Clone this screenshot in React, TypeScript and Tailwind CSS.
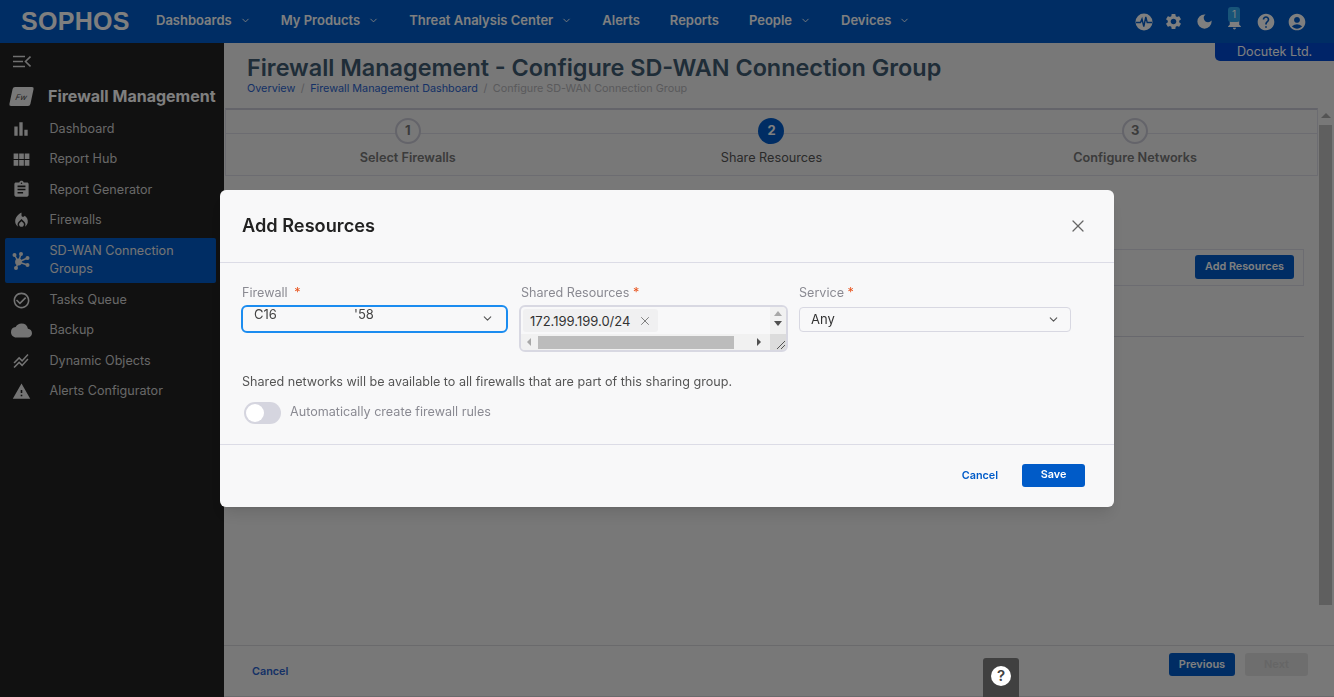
import { ChevronDown, X } from 'lucide-react'
import {
  MdAccountCircle,
  MdAssignment,
  MdBarChart,
  MdCheckCircleOutline,
  MdCloud,
  MdDarkMode,
  MdHelp,
  MdLocalFireDepartment,
  MdNotifications,
  MdSettings,
  MdStackedLineChart,
  MdViewModule,
  MdWarning,
} from 'react-icons/md'

const navItems = [
  { label: 'Dashboards', menu: true },
  { label: 'My Products', menu: true },
  { label: 'Threat Analysis Center', menu: true },
  { label: 'Alerts', menu: false },
  { label: 'Reports', menu: false },
  { label: 'People', menu: true },
  { label: 'Devices', menu: true },
]

// Hub icon for the SD-WAN entry
const HubIcon = () => (
  <svg viewBox="0 0 18 18" className="w-[18px] h-[18px]" fill="currentColor" stroke="currentColor">
    <circle cx="6.5" cy="10" r="3.4" stroke="none" />
    <circle cx="2.5" cy="3" r="2" stroke="none" />
    <circle cx="9" cy="2" r="2" stroke="none" />
    <circle cx="15.5" cy="6" r="2" stroke="none" />
    <circle cx="15.5" cy="13" r="2" stroke="none" />
    <circle cx="4" cy="16" r="2" stroke="none" />
    <path d="M6.5 10 2.5 3M6.5 10 9 2M6.5 10 15.5 6M6.5 10 15.5 13M6.5 10 4 16" strokeWidth="1.5" fill="none" />
  </svg>
)

const sideItems = [
  { label: 'Dashboard', icon: <MdBarChart size={20} />, h: 'h-[30px]' },
  { label: 'Report Hub', icon: <MdViewModule size={21} />, h: 'h-[30px]' },
  { label: 'Report Generator', icon: <MdAssignment size={19} />, h: 'h-[31px]' },
  { label: 'Firewalls', icon: <MdLocalFireDepartment size={19} />, h: 'h-[30px]' },
  { label: 'SD-WAN Connection Groups', icon: <HubIcon />, h: 'h-[45px] mt-[3px] mb-[2px]', active: true },
  { label: 'Tasks Queue', icon: <MdCheckCircleOutline size={19} />, h: 'h-[30px]' },
  { label: 'Backup', icon: <MdCloud size={21} />, h: 'h-[30px]' },
  { label: 'Dynamic Objects', icon: <MdStackedLineChart size={18} />, h: 'h-[31px]' },
  { label: 'Alerts Configurator', icon: <MdWarning size={19} />, h: 'h-[30px]' },
]

const steps = [
  { n: 1, label: 'Select Firewalls' },
  { n: 2, label: 'Share Resources', current: true },
  { n: 3, label: 'Configure Networks' },
]

const PulseIcon = () => (
  <svg viewBox="0 0 18 18" className="w-[18px] h-[18px]">
    <circle cx="9" cy="9" r="8.5" fill="currentColor" />
    <path d="M1 9.5h4.5L7 6l1.8 7.5L10.8 4l1.4 5.5H17" fill="none" stroke="#005bc8" strokeWidth="1.4" />
  </svg>
)

function Header() {
  return (
    <header className="h-[43px] shrink-0 bg-[#005bc8] flex items-center text-white">
      <div className="w-[156px] pl-[21px] text-[25px] font-bold tracking-[0.3px] leading-none font-['Liberation_Sans',sans-serif]">
        SOPHOS
      </div>
      <nav className="flex items-center gap-[30px] pb-[2px] text-[13px] font-semibold">
        {navItems.map((item) => (
          <div key={item.label} className="flex items-center">
            <span>{item.label}</span>
            {item.menu && <ChevronDown className="ml-[8px] w-[11px] h-[11px]" strokeWidth={2} />}
          </div>
        ))}
      </nav>
      <div className="ml-auto mr-[27px] flex items-center gap-[11.5px] text-white">
        <PulseIcon />
        <MdSettings size={19} />
        <MdDarkMode size={19} />
        <div className="relative">
          <MdNotifications size={19} />
          <span className="absolute -top-[5px] left-[3px] w-[12px] h-[15px] rounded-[3px] bg-[#30a8f0] text-[10px] leading-[15px] text-center">
            1
          </span>
        </div>
        <MdHelp size={20} />
        <MdAccountCircle size={20} />
      </div>
    </header>
  )
}

function Sidebar() {
  return (
    <aside className="w-[224px] shrink-0 bg-[#222222] text-[12.6px] text-[#d0d0d0]">
      <div className="h-[36px] pl-[13px] pt-[12px]">
        <svg viewBox="0 0 18 13" className="w-[18px] h-[13px]" fill="none" stroke="#e0e0e0" strokeWidth="1.6">
          <path d="M0 1.5h12M0 6.5h10M0 11.5h12M17.5 1.5 12.5 6.5l5 5" />
        </svg>
      </div>
      <div className="h-[34px] flex items-center pl-[11px]">
        <div className="w-[21px] h-[19px] bg-[#f0f0f0] rounded-[2px] -skew-x-12 text-[8px] italic text-[#444] flex items-center justify-center">
          Fw
        </div>
        <span className="ml-[16px] text-[16px] font-bold text-white whitespace-nowrap">Firewall Management</span>
      </div>
      <div className="pt-[1px] pl-[5px] pr-[8px]">
        {sideItems.map((item) => (
          <div
            key={item.label}
            className={`flex items-center ${item.h} rounded-[2px] ${item.active ? 'bg-[#005bc8] text-[#e8e8e8]' : ''}`}
          >
            <div className="w-[32px] flex justify-center text-[#e8e8e8]">{item.icon}</div>
            <span className={`ml-[12.5px] leading-[18px] w-[150px] ${item.active ? 'pb-[1px]' : ''}`}>{item.label}</span>
          </div>
        ))}
      </div>
    </aside>
  )
}

function Main() {
  return (
    <main className="relative flex-1 min-w-0 flex flex-col bg-[#f0f0f0]">
      <div className="absolute top-0 right-0 w-[119px] h-[18px] bg-[#0049d0] rounded-bl-[5px] text-[12.6px] leading-[17px] text-white pl-[22px]">
        Docutek Ltd.
      </div>
      <div className="h-[65px] shrink-0 pl-[23px] pt-[9px]">
        <h1 className="text-[23.4px] leading-[31px] font-semibold text-[#3f5a70] whitespace-nowrap">
          Firewall Management - Configure SD-WAN Connection Group
        </h1>
        <div className="text-[10.8px] leading-[14px] mt-[-1px] flex whitespace-nowrap">
          <span className="text-[#2a62cc]">Overview</span>
          <span className="mx-[5.5px] text-[#b0b0b8]">/</span>
          <span className="text-[#2a62cc]">Firewall Management Dashboard</span>
          <span className="mx-[5.5px] text-[#b0b0b8]">/</span>
          <span className="text-[#b4b4b8]">Configure SD-WAN Connection Group</span>
        </div>
      </div>
      <div className="flex-1 min-h-0 flex">
        <div className="flex-1 min-w-0 pl-[1px]">
          <div className="relative h-[68px] border-t-2 border-x border-b border-[#d8d8e2] border-t-[#c8c8d4] grid grid-cols-3">
            <div className="absolute left-0 right-0 top-[23px] h-px bg-[#d8d8e2]" />
            {steps.map((s) => (
              <div key={s.n} className="relative flex flex-col items-center pt-[8px]">
                <div
                  className={`w-[26px] h-[26px] rounded-full flex items-center justify-center text-[13px] font-bold ${
                    s.current
                      ? 'bg-[#005bc8] text-white'
                      : 'bg-[#f0f0f0] border-2 border-[#c8c8d4] text-[#777]'
                  }`}
                >
                  {s.n}
                </div>
                <span className={`mt-[4px] text-[12.7px] ${s.current ? 'font-normal text-[#555]' : 'font-semibold text-[#777]'}`}>
                  {s.label}
                </span>
              </div>
            ))}
          </div>
          <div className="mt-[73px] ml-[15px] mr-[14px] h-[37px] border border-[#d8d8e2] flex items-center justify-end pr-[9px] pb-[2px]">
            <button className="w-[99px] h-[24px] pt-[1px] rounded-[3px] bg-[#005bc8] text-white text-[10.8px] font-semibold">
              Add Resources
            </button>
          </div>
          <div className="mt-[50px] ml-[15px] mr-[14px] border-t border-[#d0d0da]" />
        </div>
        <div className="w-[16px] shrink-0 pt-[5px] pl-[1px] pr-[2px] flex flex-col items-center">
          <div className="w-0 h-0 border-x-[5px] border-x-transparent border-b-[5px] border-b-[#a8a8a8] mb-[7px]" />
          <div className="w-full h-[480px] bg-[#bebebe]" />
        </div>
      </div>
      <footer className="h-[52px] shrink-0 border-t border-b border-[#d4d4d8] flex items-start pl-[28px] pr-[26px]">
        <span className="mt-[18px] text-[10.8px] font-semibold text-[#2a62cc]">Cancel</span>
        <div className="ml-auto mt-[7px] flex gap-[10px]">
          <button className="w-[66px] h-[23px] rounded-[3px] bg-[#005bc8] text-white text-[11px] font-semibold">
            Previous
          </button>
          <button className="w-[63px] h-[23px] rounded-[3px] bg-[#dcdcdc] text-[#ccc] text-[11px] font-semibold">
            Next
          </button>
        </div>
      </footer>
    </main>
  )
}

function SharedResources() {
  return (
    <div className="relative w-[269px] h-[47px] border-2 border-[#d8d8e2] rounded-[6px] overflow-hidden bg-[#f8f8f9]">
      <div className="absolute left-[2px] top-[2px] w-[135px] h-[23px] rounded-[3px] bg-[#f0f0f1] flex items-center pl-[7px] text-[13px] text-[#333]">
        172.199.199.0/24
        <X className="ml-[8px] w-[14px] h-[14px] text-[#777]" strokeWidth={1.6} />
      </div>
      <div className="absolute right-0 top-0 bottom-0 w-[16px] bg-[#f1f1f1] flex flex-col items-center pt-[4px] gap-[5px]">
        <div className="w-0 h-0 border-x-[4px] border-x-transparent border-b-[5px] border-b-[#a8a8a8]" />
        <div className="w-0 h-0 border-x-[4px] border-x-transparent border-t-[5px] border-t-[#505050]" />
      </div>
      <div className="absolute left-0 right-0 bottom-0 h-[16px] bg-[#f1f1f1] flex items-center">
        <div className="ml-[6px] w-0 h-0 border-y-[4px] border-y-transparent border-r-[4px] border-r-[#a8a8a8]" />
        <div className="ml-[7px] w-[196px] h-[13px] bg-[#bcbcbc]" />
        <div className="ml-[23px] w-0 h-0 border-y-[4px] border-y-transparent border-l-[4px] border-l-[#505050]" />
        <div className="ml-auto w-[16px] h-[16px] bg-[#dcdcdc] flex items-end justify-end">
          <svg viewBox="0 0 12 12" className="w-[12px] h-[12px]" stroke="#555" strokeWidth="1">
            <path d="M11 3 3 11M11 7 7 11" />
          </svg>
        </div>
      </div>
    </div>
  )
}

function AddResourcesModal() {
  return (
    <div className="fixed inset-0 z-10 bg-black/50 flex justify-center items-start pt-[190px]">
      <div className="w-[894px] h-[317px] bg-[#f8f8f9] rounded-[6px] shadow-lg flex flex-col">
        <div className="h-[73px] shrink-0 border-b border-[#dcdce6] flex items-center justify-between pl-[22px] pr-[26px]">
          <h2 className="text-[18.2px] font-semibold text-[#222] pb-[1px]">Add Resources</h2>
          <X className="w-[20px] h-[20px] text-[#666]" strokeWidth={1.5} />
        </div>
        <div className="flex-1 pl-[21px] pt-[21px]">
          <div className="flex items-start text-[12.6px] leading-[18px] text-[#8a8a92]">
            <div className="w-[278px]">
              <div className="pl-[1px] h-[22px]">
                Firewall <span className="text-[#e8541e] ml-[3px]">*</span>
              </div>
              <div className="w-[267px] h-[28px] -mt-[1px] border-2 border-[#1b8cf0] rounded-[6px] flex items-start pl-[11px] text-[13px] leading-[16px] text-[#444]">
                <span className="w-[100px] -mt-[1px]">C16</span>
                <span className="-mt-[1px]">'58</span>
                <ChevronDown className="ml-auto mr-[12px] mt-[5px] w-[13px] h-[13px] text-[#555]" />
              </div>
            </div>
            <div className="w-[280px]">
              <div className="pl-[2px] h-[22px]">
                Shared Resources <span className="text-[#e8541e]">*</span>
              </div>
              <div className="-mt-[1px]">
                <SharedResources />
              </div>
            </div>
            <div>
              <div className="h-[22px]">
                Service <span className="text-[#e8541e]">*</span>
              </div>
              <div className="w-[272px] h-[25px] mt-[1px] border border-[#d8d8e2] rounded-[4px] flex items-center pl-[11px] pr-[10px] pb-[1px] text-[13px] leading-[16px] text-[#333]">
                Any
                <ChevronDown className="ml-auto w-[13px] h-[13px] text-[#555]" />
              </div>
            </div>
          </div>
          <p className="mt-[22px] pl-[1px] text-[12.6px] leading-[16px] text-[#555]">
            Shared networks will be available to all firewalls that are part of this sharing group.
          </p>
          <div className="mt-[12px] pl-[3px] flex items-center">
            <div className="w-[37px] h-[22px] rounded-full bg-[#d5d5df] p-[2px]">
              <div className="w-[18px] h-[18px] rounded-full bg-white" />
            </div>
            <span className="ml-[9px] -translate-y-[1px] text-[12.6px] text-[#8a8a92]">Automatically create firewall rules</span>
          </div>
        </div>
        <div className="h-[63px] shrink-0 border-t border-[#dcdce6] flex items-center justify-end pr-[29px] pb-[2px]">
          <button className="pt-[2px] text-[10.8px] font-semibold text-[#005bc8]">Cancel</button>
          <button className="ml-[24px] w-[63px] h-[23px] pt-[1px] rounded-[3px] bg-[#005bc8] text-white text-[10.8px] font-semibold">
            Save
          </button>
        </div>
      </div>
    </div>
  )
}

export default function App() {
  return (
    <div className="h-screen overflow-hidden flex flex-col font-['Inter',sans-serif]">
      <Header />
      <div className="flex-1 min-h-0 flex">
        <Sidebar />
        <Main />
      </div>
      <AddResourcesModal />
      <div className="fixed z-20 bottom-0 left-[983px] w-[36px] h-[39px] rounded-t-[3px] bg-[#404040] flex justify-center pt-[8px]">
        <div className="w-[20px] h-[20px] rounded-full bg-white text-[#404040] text-[15px] leading-[20px] font-semibold text-center">
          ?
        </div>
      </div>
    </div>
  )
}
